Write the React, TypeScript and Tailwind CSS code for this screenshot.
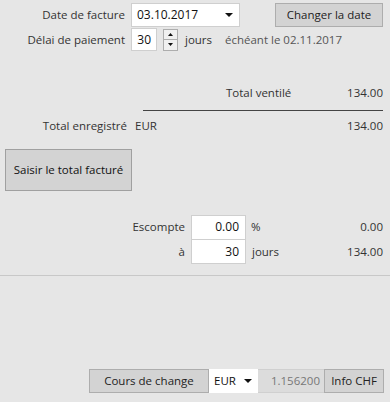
// Invoice terms panel – date, payment delay, totals, discount, exchange rate

const Caret = () => (
  <svg width="8" height="4" viewBox="0 0 8 4" className="shrink-0">
    <path d="M0 0h8L4 4z" fill="#111" />
  </svg>
);

export default function App() {
  return (
    <div className="w-[390px] h-[402px] bg-[#e6e6e6] text-[11.5px] leading-none text-[#333] font-['Open_Sans',sans-serif] flex flex-col overflow-hidden">
      {/* Date de facture */}
      <div className="flex items-center mt-[3px] h-[24px]">
        <div className="w-[125px] text-right">Date de facture</div>
        <div className="ml-[6px] w-[109px] h-[24px] bg-white border border-[#cfcfcf] flex items-center justify-between pl-[5px] pr-[6px] text-[#111] text-[12px]">
          <span>03.10.2017</span>
          <Caret />
        </div>
        <button className="ml-auto mr-[7px] w-[108px] h-[24px] bg-[#d3d3d3] border border-[#adadad] text-[#222]">
          Changer la date
        </button>
      </div>

      {/* Délai de paiement */}
      <div className="flex items-center mt-[1px] h-[23px]">
        <div className="w-[125px] text-right">Délai de paiement</div>
        <div className="ml-[6px] w-[26px] h-[23px] bg-white border border-[#cfcfcf] flex items-center justify-end pr-[5px] text-[#111] text-[12px]">
          30
        </div>
        <div className="ml-[6px] w-[15px] h-[22px] flex flex-col">
          <div className="h-[11px] border border-[#adadad] bg-[#f0f0f0] flex items-center justify-center">
            <svg width="5" height="3" viewBox="0 0 5 3">
              <path d="M0 3h5L2.5 0z" fill="#111" />
            </svg>
          </div>
          <div className="h-[11px] border border-t-0 border-[#adadad] bg-[#f0f0f0] flex items-center justify-center">
            <svg width="5" height="3" viewBox="0 0 5 3">
              <path d="M0 0h5L2.5 3z" fill="#111" />
            </svg>
          </div>
        </div>
        <span className="ml-[7px] w-[40px]">jours</span>
        <span className="text-[#555]">échéant le 02.11.2017</span>
      </div>

      {/* Totals */}
      <div className="flex items-center mt-[34px] h-[16px]">
        <div className="w-[226px]" />
        <span>Total ventilé</span>
        <span className="ml-auto mr-[7px]">134.00</span>
      </div>
      <div className="ml-[143px] mr-[7px] mt-[9px] h-px bg-[#444]" />
      <div className="flex items-center mt-[7px] h-[16px]">
        <div className="w-[127px] text-right">Total enregistré</div>
        <span className="ml-[8px]">EUR</span>
        <span className="ml-auto mr-[7px]">134.00</span>
      </div>

      <button className="ml-[5px] mt-[15px] w-[127px] h-[42px] bg-[#d3d3d3] border border-[#a0a0a0] text-[#111]">
        Saisir le total facturé
      </button>

      {/* Escompte */}
      <div className="mt-[24px] flex flex-col">
        <div className="flex items-center h-[24px]">
          <div className="w-[191px] text-right pr-[6px]">Escompte</div>
          <div className="w-[55px] h-[25px] bg-white border border-[#cfcfcf] flex items-center justify-end pr-[6px] text-[#111] text-[12px]">
            0.00
          </div>
          <span className="ml-[5px]">%</span>
          <span className="ml-auto mr-[7px]">0.00</span>
        </div>
        <div className="flex items-center h-[25px]">
          <div className="w-[191px] text-right pr-[6px]">à</div>
          <div className="w-[55px] h-[25px] bg-white border border-[#cfcfcf] flex items-center justify-end pr-[6px] text-[#111] text-[12px]">
            30
          </div>
          <span className="ml-[6px]">jours</span>
          <span className="ml-auto mr-[7px]">134.00</span>
        </div>
      </div>

      <div className="mt-[11px] h-px bg-[#c8c8c8]" />

      {/* Cours de change */}
      <div className="mt-auto mb-[9px] flex justify-end mr-[6px] h-[24px]">
        <button className="w-[120px] h-[24px] bg-[#d3d3d3] border border-[#adadad] text-[#222]">
          Cours de change
        </button>
        <div className="w-[49px] h-[24px] bg-white flex items-center justify-between pl-[5px] pr-[6px] text-[#111]">
          <span>EUR</span>
          <Caret />
        </div>
        <div className="w-[66px] h-[24px] bg-[#dcdcdc] border-y border-[#d0d0d0] flex items-center justify-end pr-[4px] text-[#777]">
          1.156200
        </div>
        <button className="w-[60px] h-[24px] bg-[#d3d3d3] border border-[#adadad] text-[#222]">
          Info CHF
        </button>
      </div>
    </div>
  );
}
